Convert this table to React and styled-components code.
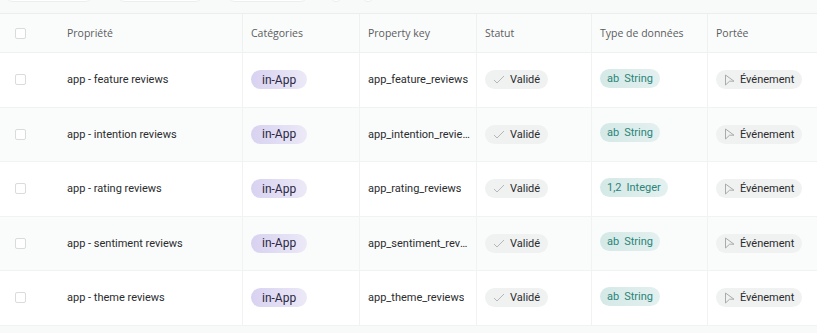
import React from "react";
import styled, { createGlobalStyle } from "styled-components";

const Global = createGlobalStyle`
  html, body { margin: 0; padding: 0; background: #f8fafa; }
  body { font-family: Roboto, Inter, sans-serif; }
`;

const Page = styled.div`
  width: 817px;
  height: 333px;
  overflow: hidden;
  background: #f8fafa;
`;

const FilterBar = styled.div`
  height: 14px;
  display: flex;
  gap: 20px;
  padding-left: 3px;
  align-items: flex-start;
  border-bottom: 1px solid #eceeee;
  box-sizing: border-box;
  overflow: hidden;
`;

const FilterPill = styled.div`
  width: ${(p) => p.w}px;
  height: 20px;
  margin-top: -18.5px;
  flex: none;
  border-radius: 10px;
  background: #ffffff;
  border: 1px solid #eceeee;
  box-sizing: border-box;
`;

const Table = styled.div`
  display: grid;
  grid-template-columns: 242px 117px 117px 115px 116px 110px;
  background: #fff;
`;

const HeadCell = styled.div`
  height: 39px;
  display: flex;
  align-items: center;
  padding-left: ${(p) => (p.first ? "15px" : "8px")};
  gap: 41px;
  font-family: "Open Sans", Inter, sans-serif;
  font-size: 10.5px;
  color: #5a5d5f;
  background: #fafbfb;
  border-bottom: 1px solid #eff1f1;
  border-left: ${(p) => (p.first ? "none" : "1px solid #eff1f1")};
  box-sizing: border-box;
`;

const Cell = styled.div`
  height: 54.5px;
  display: flex;
  align-items: center;
  padding-left: ${(p) => (p.first ? "15px" : "8px")};
  gap: 41px;
  font-size: 11px;
  color: #2a2c2e;
  background: ${(p) => (p.alt ? "#fafbfb" : "#ffffff")};
  border-bottom: 1px solid #f1f3f3;
  border-left: ${(p) => (p.first ? "none" : "1px solid #f1f3f3")};
  box-sizing: border-box;
  white-space: nowrap;
  overflow: hidden;
`;

const Check = styled.span`
  width: 11px;
  height: 11px;
  border: 1px solid #d9dbdc;
  border-radius: 2px;
  background: #fff;
  box-sizing: border-box;
  flex: none;
`;

const Truncate = styled.span`
  display: block;
  max-width: 102px;
  overflow: hidden;
  text-overflow: ellipsis;
`;

const Pill = styled.span`
  display: inline-flex;
  align-items: center;
  gap: 5px;
  height: 19px;
  padding: 0 ${(p) => p.pad || 9}px;
  border-radius: 10px;
  font-size: ${(p) => (p.kind === "cat" ? "12px" : "11px")};
  margin-top: ${(p) => p.shift || 0}px;
  background: ${(p) =>
    p.kind === "cat"
      ? "linear-gradient(90deg, #d8d2f1 0%, #ece9f7 100%)"
      : p.kind === "type"
      ? "linear-gradient(90deg, #d4e9e7 0%, #e3f0ef 100%)"
      : "#f0f1f1"};
  color: ${(p) =>
    p.kind === "cat" ? "#2b2742" : p.kind === "type" ? "#2b8479" : "#2a2c2e"};
`;

const TypeTag = styled.span`
  color: #2b8479;
`;

const CheckIcon = () => (
  <svg width="12" height="9" viewBox="0 0 12 9" fill="none">
    <path d="M1 5 L4 8 L11 1" stroke="#b4b7b8" strokeWidth="1" />
  </svg>
);

const CursorIcon = () => (
  <svg width="11" height="12" viewBox="0 0 11 12" fill="none">
    <path d="M1.5 1 L10 7.2 L5.6 7.2 L1.5 11 Z" stroke="#a8abad" strokeWidth="1" strokeLinejoin="round" />
  </svg>
);

const rows = [
  { name: "app - feature reviews", key: "app_feature_reviews", type: "String" },
  { name: "app - intention reviews", key: "app_intention_reviews", type: "String" },
  { name: "app - rating reviews", key: "app_rating_reviews", type: "Integer" },
  { name: "app - sentiment reviews", key: "app_sentiment_reviews", type: "String" },
  { name: "app - theme reviews", key: "app_theme_reviews", type: "String" },
];

export default function App() {
  return (
    <Page>
      <Global />
      <FilterBar>
        <FilterPill w={92} />
        <FilterPill w={90} />
        <FilterPill w={85} />
        <FilterPill w={12} />
        <FilterPill w={12} />
      </FilterBar>
      <Table>
        <HeadCell first>
          <Check />
          <span>Propriété</span>
        </HeadCell>
        <HeadCell>Catégories</HeadCell>
        <HeadCell>Property key</HeadCell>
        <HeadCell>Statut</HeadCell>
        <HeadCell>Type de données</HeadCell>
        <HeadCell>Portée</HeadCell>
        {rows.map((r, i) => {
          const alt = i % 2 === 1;
          return (
            <React.Fragment key={r.key}>
              <Cell first alt={alt}>
                <Check />
                <span>{r.name}</span>
              </Cell>
              <Cell alt={alt}>
                <Pill kind="cat" pad={11}>in-App</Pill>
              </Cell>
              <Cell alt={alt}>
                <Truncate>{r.key}</Truncate>
              </Cell>
              <Cell alt={alt}>
                <Pill kind="status" pad={8}>
                  <CheckIcon />
                  Validé
                </Pill>
              </Cell>
              <Cell alt={alt}>
                <Pill kind="type" pad={7} shift={-3}>
                  <TypeTag>{r.type === "Integer" ? "1,2" : "ab"}</TypeTag>
                  {r.type}
                </Pill>
              </Cell>
              <Cell alt={alt}>
                <Pill kind="scope" pad={8}>
                  <CursorIcon />
                  Événement
                </Pill>
              </Cell>
            </React.Fragment>
          );
        })}
      </Table>
    </Page>
  );
}
